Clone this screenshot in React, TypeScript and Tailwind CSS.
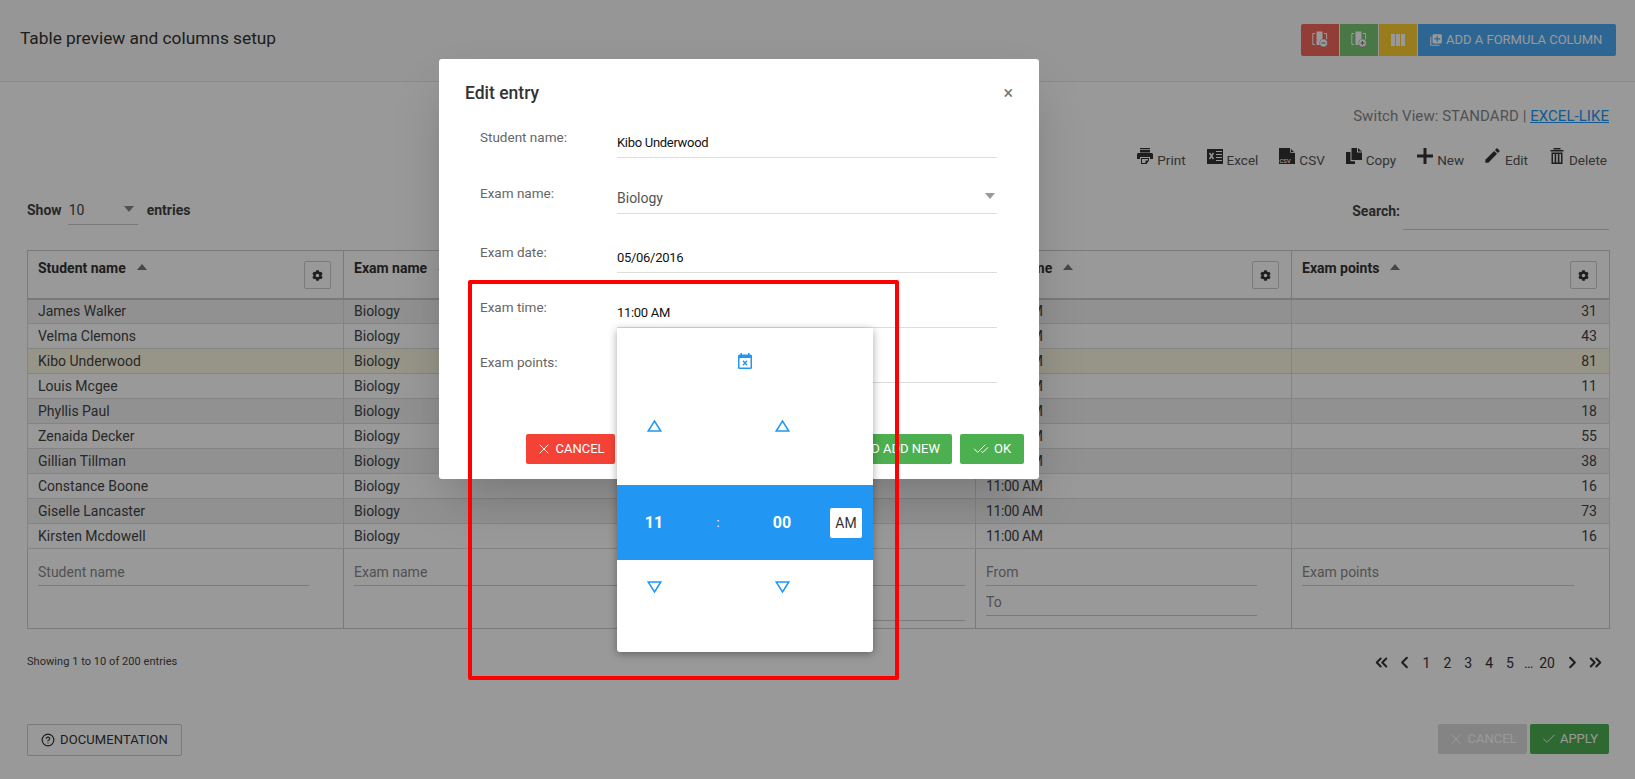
import { Check, CheckCheck, ChevronLeft, ChevronRight, ChevronsLeft, ChevronsRight, CircleHelp, X } from "lucide-react";
import { FaCog } from "react-icons/fa";
import { MdEdit, MdLibraryAdd } from "react-icons/md";

const rows = [
  { name: "James Walker", points: 31 },
  { name: "Velma Clemons", points: 43 },
  { name: "Kibo Underwood", points: 81 },
  { name: "Louis Mcgee", points: 11 },
  { name: "Phyllis Paul", points: 18 },
  { name: "Zenaida Decker", points: 55 },
  { name: "Gillian Tillman", points: 38 },
  { name: "Constance Boone", points: 16 },
  { name: "Giselle Lancaster", points: 73 },
  { name: "Kirsten Mcdowell", points: 16 },
];

// the third heading sits fully behind the dialog
const columns = ["Student name", "Exam name", "", "Exam time", "Exam points"];

const ColumnIcon = ({ sign }: { sign: "minus" | "plus" }) => (
  <svg width="16" height="17" viewBox="0 0 16 17" fill="none">
    <path d="M3 2.500H.8v11H3M12 2.500h2.600v6" stroke="currentColor" strokeWidth="1" />
    <rect x="4.500" y="0.500" width="6" height="13.500" fill="currentColor" />
    <circle cx="11.500" cy="12" r="4" fill="currentColor" stroke="#000" strokeOpacity=".2" />
    <path d={sign === "minus" ? "M9.500 12h4" : "M9.500 12h4M11.500 10v4"} stroke="#777" strokeWidth="1" />
  </svg>
);

const PrintIcon = () => (
  <svg width="16" height="16" viewBox="0 0 16 16" fill="currentColor">
    <path d="M3 0h10v1.200H3zM3 2h10v2.400H3zM1.500 5h13c.8 0 1.500.7 1.500 1.500V11h-3V9H3v2H0V6.500C0 5.700.7 5 1.500 5zM4 10h8v2.500L9.500 16H4zm1 1v4h3.500v-2.500H11V11z" fillRule="evenodd" />
  </svg>
);

const ExcelIcon = () => (
  <svg width="16" height="16" viewBox="0 0 16 16">
    <path d="M0 1h11l5 0v15H0z" fill="currentColor" />
    <path d="M2.500 5l4 6M6.500 5l-4 6" stroke="#fff" strokeWidth="1.400" />
    <path d="M9 3.500h6M9 6.500h6M9 9.500h6M9 12.500h6" stroke="#fff" strokeWidth="1" />
  </svg>
);

const CsvIcon = () => (
  <svg width="16" height="16" viewBox="0 0 16 16">
    <path d="M0 0h11l5 5v11H0z" fill="currentColor" />
    <path d="M11.500 0v4.500H16" stroke="#fff" strokeWidth=".8" fill="none" />
    <text x="0.500" y="15" fontSize="7.500" fill="#fff" fontFamily="Liberation Sans, sans-serif">csv</text>
  </svg>
);

const CopyIcon = () => (
  <svg width="16" height="16" viewBox="0 0 16 16" fill="currentColor">
    <path d="M5.500 0H11v4.500h5V12H5.500z" />
    <path d="M12 0l4 3.500h-4z" />
    <path d="M0 4h4.500v9.200H9V16H0z" />
  </svg>
);

const PlusIcon = () => (
  <svg width="16" height="16" viewBox="0 0 16 16" fill="currentColor">
    <path d="M6.500 0h3v6.500H16v3H9.500V16h-3V9.500H0v-3h6.500z" />
  </svg>
);

const TrashIcon = () => (
  <svg width="16" height="16" viewBox="0 0 16 16" fill="currentColor">
    <path d="M4.500 0h7v1.500h-7zM1.500 2h13v1.500h-13zM2.500 4.500h11V16h-11zM4 6v8.500h1.600V6zm3.200 0v8.500h1.600V6zm3.200 0v8.500H12V6z" fillRule="evenodd" />
  </svg>
);

const CalendarIcon = () => (
  <svg width="14" height="16" viewBox="0 0 14 16">
    <path d="M1.500 1.500h11A1.500 1.500 0 0 1 14 3v11.500a1.500 1.500 0 0 1-1.500 1.500h-11A1.500 1.500 0 0 1 0 14.500V3a1.500 1.500 0 0 1 1.500-1.500z" fill="#2196f3" />
    <rect x="2.500" y="0" width="1.500" height="2.500" fill="#2196f3" />
    <rect x="10" y="0" width="1.500" height="2.500" fill="#2196f3" />
    <rect x="1.500" y="5" width="11" height="9.500" fill="#fff" />
    <path d="M5 7.800l4 4.400M9 7.800l-4 4.400" stroke="#2196f3" strokeWidth="1.300" />
  </svg>
);

const Triangle = ({ down }: { down?: boolean }) => (
  <svg width="15" height="12" viewBox="0 0 15 12" fill="none">
    <path d={down ? "M1.200 1h12.600L7.500 11z" : "M1.200 11h12.600L7.500 1z"} stroke="#2196f3" strokeWidth="1.500" />
  </svg>
);

const SortArrow = () => <span className="ml-[11px] mt-[6px] h-0 w-0 border-x-[5px] border-b-[6px] border-x-transparent border-b-[#777]" />;

const tools = [
  { label: "Print", icon: <PrintIcon /> },
  { label: "Excel", icon: <ExcelIcon /> },
  { label: "CSV", icon: <CsvIcon /> },
  { label: "Copy", icon: <CopyIcon /> },
  { label: "New", icon: <PlusIcon /> },
  { label: "Edit", icon: <MdEdit size={19} className="-ml-[2px] -mr-[1px] -mt-[2px]" /> },
  { label: "Delete", icon: <TrashIcon /> },
];

const fields = [
  { label: "Student name:", value: "Kibo Underwood", gap: "mt-[22px]", dark: true },
  { label: "Exam name:", value: "Biology", gap: "mt-[25px]", select: true },
  { label: "Exam date:", value: "05/06/2016", gap: "mt-[28px]", dark: true },
  { label: "Exam time:", value: "11:00 AM", gap: "mt-[24px]", dark: true },
  { label: "Exam points:", value: "", gap: "mt-[24px]", dark: true },
];

export default function App() {
  return (
    <div className="relative h-[779px] w-[1635px] overflow-hidden bg-white font-['Roboto',sans-serif] text-[14px] leading-5 text-[#444]">
      <header className="flex h-[82px] items-center justify-between border-b border-[#e6e6e6] bg-[#fafafa] pl-[20px] pr-[19px]">
        <h1 className="-mt-[6px] text-[17.300px] font-normal text-[#333]">Table preview and columns setup</h1>
        <div className="mt-[-2px] flex h-[32px] gap-px text-white">
          <button className="flex w-[38px] items-center justify-center rounded-l-[2px] bg-[#f4675a]"><ColumnIcon sign="minus" /></button>
          <button className="flex w-[38px] items-center justify-center bg-[#7bc875]"><ColumnIcon sign="plus" /></button>
          <button className="flex w-[38px] items-center justify-center bg-[#ffcf33]">
            <svg width="14" height="12" viewBox="0 0 14 12" fill="currentColor"><path d="M0 0h4v12H0zM5 0h4v12H5zM10 0h4v12h-4z" /></svg>
          </button>
          <button className="flex w-[198px] items-center gap-[3px] rounded-r-[2px] bg-[#4baaf5] pl-[11px] text-[13px]"><MdLibraryAdd size={14} />ADD A FORMULA COLUMN</button>
        </div>
      </header>

      <main className="pl-[27px] pr-[26px]">
        <div className="mt-[24px] text-right text-[15px] tracking-[0.05px] text-[#888]">
          Switch View: STANDARD | <a className="text-[#2196f3] underline">EXCEL-LIKE</a>
        </div>

        <div className="mt-[19px] flex h-[24px] justify-end gap-[21px] pr-[2px] text-[13.500px] text-[#555]">
          {tools.map((tool) => (
            <div key={tool.label} className="flex items-start gap-[4px]">
              <span className="pt-[3px] text-[#333]">{tool.icon}</span>
              <span className="mt-[5px]">{tool.label}</span>
            </div>
          ))}
        </div>

        <div className="mt-[26px] flex h-[35px] items-start justify-between">
          <div className="flex items-center font-bold">
            <span className="mt-[-1px]">Show</span>
            <div className="relative ml-[6px] h-[30px] w-[70px] border-b border-[#ccc] pl-[1px] pt-[5px] font-normal">
              10
              <span className="absolute right-[4px] top-[11px] h-0 w-0 border-x-[5px] border-t-[6px] border-x-transparent border-t-[#888]" />
            </div>
            <span className="ml-[9px] mt-[-1px]">entries</span>
          </div>
          <div className="flex font-bold">
            <span className="mt-[6px]">Search:</span>
            <div className="ml-[3px] h-[35px] w-[206px] border-b border-[#ccc]" />
          </div>
        </div>

        <table className="mt-[20px] w-[1582px] table-fixed border-collapse border border-[#ccc]">
          <thead>
            <tr>
              {columns.map((col, i) => (
                <th key={i} className={`h-[48px] border-x border-b-2 border-[#ccc] p-0 align-top ${i === 4 ? "w-[318px]" : "w-[316px]"}`}>
                  <div className="flex items-start pl-[10px] pr-[12px] pt-[7px] text-left font-bold text-[#333]">
                    {col}
                    {col && <SortArrow />}
                    <span className="ml-auto mt-[3px] flex h-[28px] w-[27px] items-center justify-center rounded-[2px] border border-[#ccc]"><FaCog size={11} /></span>
                  </div>
                </th>
              ))}
            </tr>
          </thead>
          <tbody>
            {rows.map((row, i) => (
              <tr key={row.name} className={row.name === "Kibo Underwood" ? "bg-[#fcf8e3]" : i % 2 === 0 ? "bg-[#f2f2f2]" : ""}>
                <td className="h-[25px] border border-[#ddd] py-0 pl-[10px]">{row.name}</td>
                <td className="h-[25px] border border-[#ddd] py-0 pl-[10px]">Biology</td>
                <td className="h-[25px] border border-[#ddd] py-0 pl-[10px]" />
                <td className="h-[25px] border border-[#ddd] py-0 pl-[10px] tracking-[-0.4px]">11:00 AM</td>
                <td className="h-[25px] border border-[#ddd] py-0 pr-[12px] text-right">{row.points}</td>
              </tr>
            ))}
            <tr className="text-[#888]">
              <td className="h-[80px] border border-[#ccc] px-[10px] align-top">
                <div className="mt-[13px] h-[24px] w-[271px] border-b border-[#ccc]">Student name</div>
              </td>
              <td className="h-[80px] border border-[#ccc] px-[10px] align-top">
                <div className="mt-[13px] h-[24px] w-[271px] border-b border-[#ccc]">Exam name</div>
              </td>
              <td className="h-[80px] border border-[#ccc] px-[10px] align-top">
                <div className="mt-[13px] h-[24px] w-[295px] border-b border-[#ccc]" />
                <div className="mt-[12px] h-[23px] w-[295px] border-b border-[#ccc]" />
              </td>
              <td className="h-[80px] border border-[#ccc] px-[10px] align-top">
                <div className="mt-[13px] h-[24px] w-[271px] border-b border-[#ccc]">From</div>
                <div className="mt-[6px] h-[24px] w-[271px] border-b border-[#ccc]">To</div>
              </td>
              <td className="h-[80px] border border-[#ccc] px-[10px] align-top">
                <div className="mt-[13px] h-[24px] w-[272px] border-b border-[#ccc]">Exam points</div>
              </td>
            </tr>
          </tbody>
        </table>

        <div className="mt-[20px] flex h-[30px] items-center justify-between">
          <span className="-mt-[5px] text-[11px] tracking-[0.05px]">Showing 1 to 10 of 200 entries</span>
          <div className="-mt-[3px] flex items-center text-[#333]">
            <ChevronsLeft size={19} strokeWidth={2.5} />
            <ChevronLeft size={19} strokeWidth={2.5} className="ml-[4px]" />
            <div className="ml-[9px] flex gap-[13px]"><span>1</span><span>2</span><span>3</span><span>4</span><span>5</span></div>
            <span className="ml-[10px]">…</span>
            <span className="ml-[6px]">20</span>
            <ChevronRight size={19} strokeWidth={2.5} className="ml-[8px]" />
            <ChevronsRight size={19} strokeWidth={2.5} className="ml-[4px] mr-[4px]" />
          </div>
        </div>

        <div className="mt-[45px] flex items-start justify-between">
          <button className="flex h-[32px] w-[155px] items-center justify-center gap-[5px] rounded-[2px] border border-[#ccc] text-[13px] tracking-[0.1px] text-[#333]"><CircleHelp size={14} />DOCUMENTATION</button>
          <div className="flex gap-[3px] text-[13px] text-white">
            <button className="flex h-[30px] w-[89px] items-center justify-center gap-[3px] rounded-[2px] bg-[#ddd]"><X size={16} strokeWidth={1.5} />CANCEL</button>
            <button className="flex h-[30px] w-[79px] items-center justify-center gap-[3px] rounded-[2px] bg-[#4caf50]"><Check size={16} strokeWidth={1.5} />APPLY</button>
          </div>
        </div>
      </main>

      {/* dimmed page behind the dialog */}
      <div className="absolute inset-0 bg-black/40" />

      <div className="absolute left-[439px] top-[59px] h-[420px] w-[600px] rounded-[3px] bg-white shadow-2xl">
        <div className="relative pl-[26px] pr-[26px] pt-[22px]">
          <h2 className="text-[17.500px] font-medium leading-6 text-[#333]">Edit entry</h2>
          <span className="absolute right-[26px] top-[22px] text-[18px] leading-6 text-[#777]">×</span>
        </div>

        <div className="pl-[41px] pr-[42px]">
          {fields.map((field) => (
            <div key={field.label} className={`flex ${field.gap}`}>
              <label className="w-[137px] shrink-0 text-[13.500px] text-[#666]">{field.label}</label>
              <div className={`relative h-[31px] grow border-b border-[#ddd] ${field.dark ? "pt-[6px] text-[13px] tracking-[-0.3px] text-[#111]" : "pt-[5px] text-[#555]"}`}>
                {field.value}
                {field.select && <span className="absolute right-[2px] top-[10px] h-0 w-0 border-x-[5px] border-t-[6px] border-x-transparent border-t-[#999]" />}
              </div>
            </div>
          ))}
        </div>

        <div className="mt-[51px] flex pl-[87px] pr-[15px] text-[13px] text-white">
          <button className="flex h-[30px] w-[89px] items-center justify-center gap-[3px] rounded-[2px] bg-[#f44336]"><X size={16} strokeWidth={1.5} />CANCEL</button>
          <button className="ml-auto flex h-[30px] items-center gap-[5px] rounded-[2px] bg-[#4caf50] px-[12px]"><Check size={13} />SAVE AND ADD NEW</button>
          <button className="ml-[8px] flex h-[30px] w-[64px] items-center justify-center gap-[5px] rounded-[2px] bg-[#4caf50]"><CheckCheck size={16} strokeWidth={1.5} />OK</button>
        </div>

        {/* time picker popup */}
        <div className="absolute left-[178px] top-[269px] h-[324px] w-[256px] rounded-b-[3px] bg-white shadow-[0_2px_8px_rgba(0,0,0,0.35)]">
          <div className="flex h-[66px] items-center justify-center"><CalendarIcon /></div>
          <div className="grid h-[91px] grid-cols-[74px_54px_74px_54px] justify-items-center pt-[26px]">
            <Triangle />
            <span />
            <Triangle />
          </div>
          <div className="grid h-[75px] grid-cols-[74px_54px_74px_54px] items-center justify-items-center bg-[#2196f3] text-white">
            <span className="text-[16px] font-bold">11</span>
            <span className="text-[13px]">:</span>
            <span className="text-[16px] font-bold">00</span>
            <span className="flex h-[30px] w-[32px] items-center justify-center rounded-[2px] bg-white text-[#333]">AM</span>
          </div>
          <div className="grid grid-cols-[74px_54px_74px_54px] justify-items-center pt-[21px]">
            <Triangle down />
            <span />
            <Triangle down />
          </div>
        </div>
      </div>

      {/* red annotation box */}
      <div className="absolute left-[468px] top-[280px] h-[400px] w-[431px] rounded-[2px] border-4 border-[#ff0000]" />
    </div>
  );
}
